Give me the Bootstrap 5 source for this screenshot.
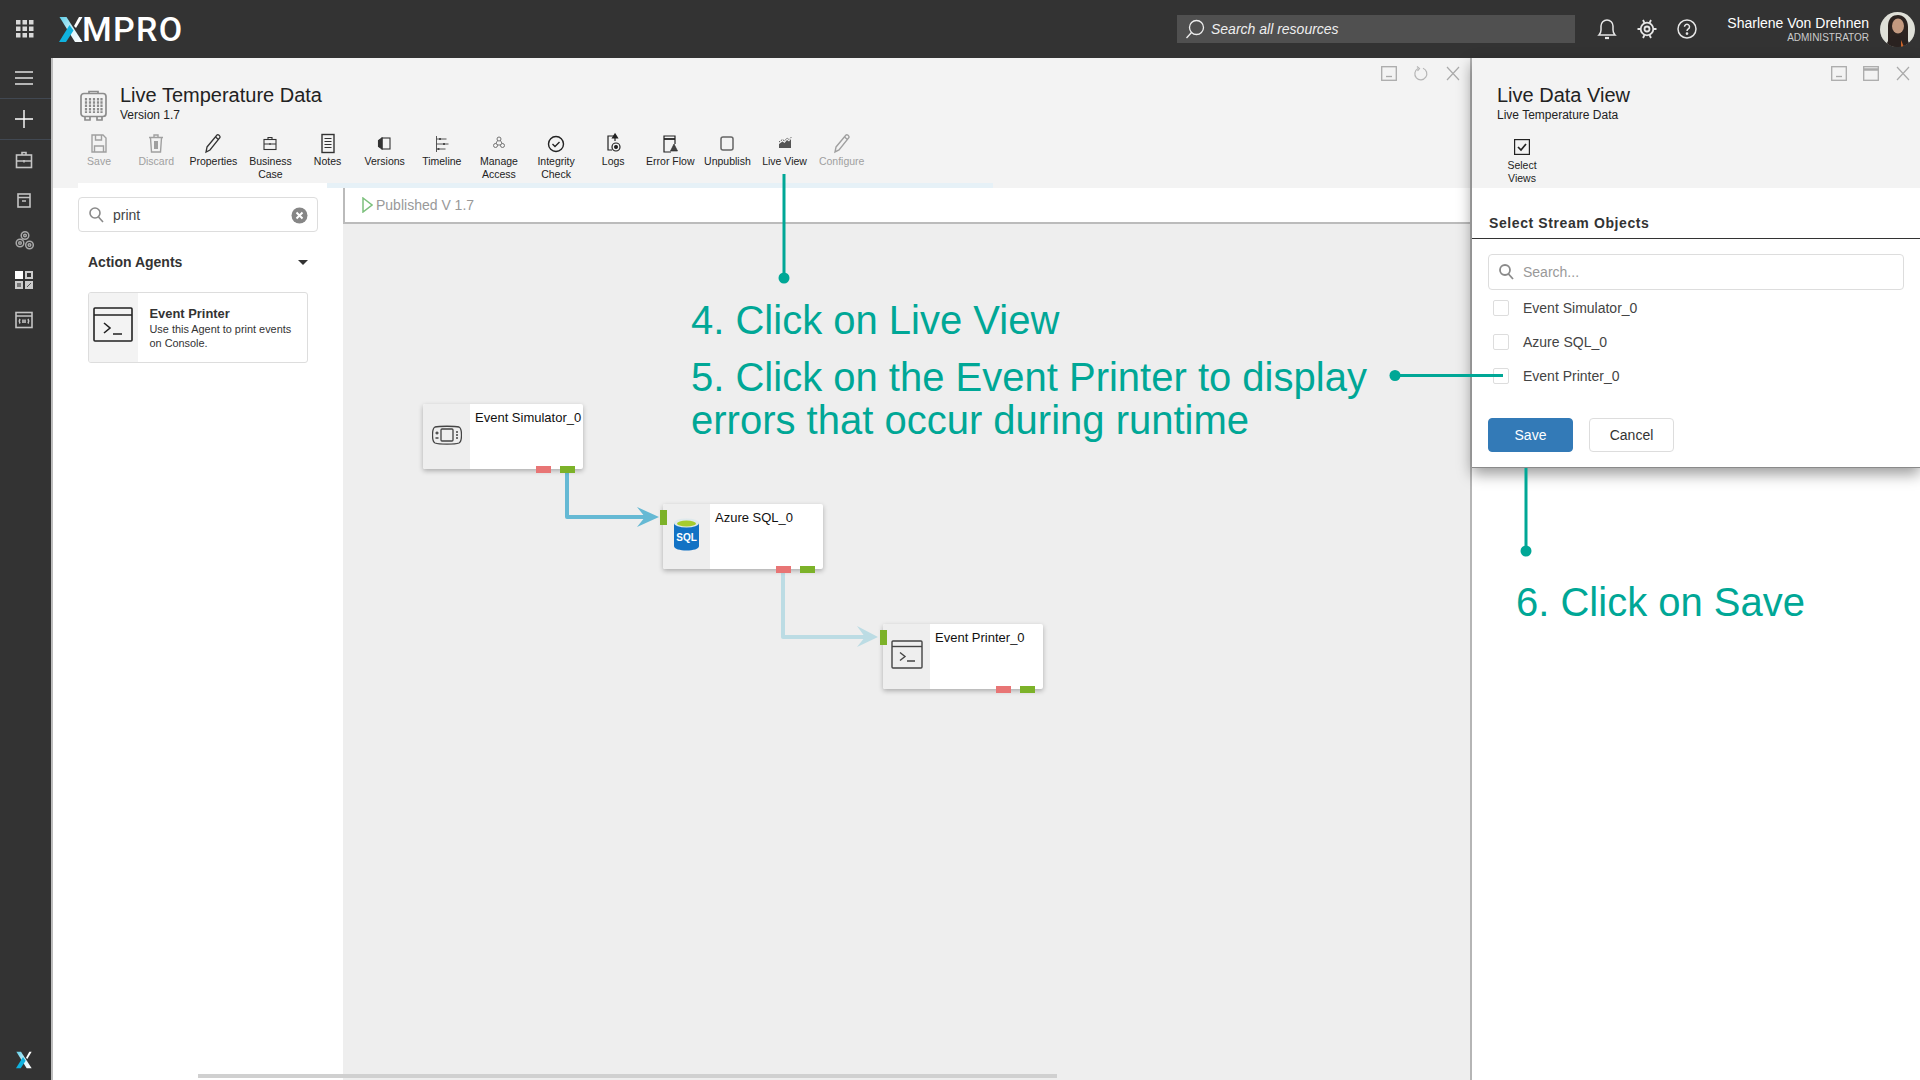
<!DOCTYPE html>
<html lang="en">
<head>
<meta charset="utf-8">
<title>XMPRO - Live Temperature Data</title>
<link href="https://cdn.jsdelivr.net/npm/bootstrap@5.3.0/dist/css/bootstrap.min.css" rel="stylesheet">
<style>
html,body{height:100%;margin:0;overflow:hidden}
body{font-family:"Liberation Sans",Arial,sans-serif;font-size:14px;color:#333;background:#fff}
svg{display:block;flex:none}
.xm-app{position:relative;width:1920px;height:1080px;overflow:hidden}
.xm-top{height:58px;background:#333;color:#fff;padding-left:15px;padding-right:5px}
.xm-top>*{flex:none}
.xm-logo{margin-left:24px;width:122px;height:26px}
.xm-logo-text{font-family:Roboto,"Liberation Sans",sans-serif;font-weight:500;font-size:34px;line-height:26px;letter-spacing:1.3px;color:#fff;margin-left:-1px}
.xm-search-all{width:398px;height:28px;margin-left:996px;background:#505050;padding-left:8px;color:#eee;font-style:italic;font-size:14px}
.xm-search-all svg{margin-right:6px}
.xm-tops{margin-left:22px;gap:20px}
.xm-user{width:172px;text-align:right;line-height:14px;padding-top:1px}
.xm-user-name{font-size:14px;color:#fff;line-height:16px}
.xm-user-role{font-size:10px;color:#ccc;line-height:12px;margin-top:1px}
.xm-avatar{margin-left:11px}
.xm-body{height:1022px}
.xm-side{width:53px;background:#333;border-right:2px solid #bdbdbd;flex:none}
.xm-side-item{height:40px;width:51px;padding-right:3px}
.xm-side-sep{border-bottom:1px solid #414852;height:41px}
.xm-side-x{margin-top:auto;margin-bottom:11px;height:18px;padding-right:3px}
.xm-main{width:1417px;flex:none;position:relative}
.xm-head{height:130px;background:#f3f3f3;flex:none}
.xm-winrow{height:25px;padding:8px 9px 0 0;gap:16px}
.xm-title{font-size:20px;line-height:24px;color:#222}
.xm-sub{font-size:12px;line-height:15px;color:#222;margin-top:1px}
.xm-titlerow{padding-left:27px;gap:13px;height:39px}
.xm-titlerow svg{margin-top:7px}
.xm-tools{padding-left:17.5px;margin-top:10px}
.xm-tool{width:57.14px;text-align:center;font-size:10.5px;line-height:13px;color:#222;flex:none}
.xm-tool svg{margin:0 auto 0;height:23px}
.xm-tool.xm-off{color:#a0a0a0}
.xm-strip{margin-top:auto;height:5px;margin-left:25px;width:915px;background:#e6f1f7}
.xm-strip-w{width:249px;height:5px;background:#fff}
.xm-work{height:892px}
.xm-pal{width:290px;flex:none;padding:9px 25px 0;background:#fff}
.xm-pal-search{height:35px;padding:1px 9px 0 10px;border:1px solid #ddd;border-radius:4px;font-size:14px;color:#444}
.xm-pal-search span{margin-left:9px}
.xm-pal-head{height:60px;padding:0 10px 0 10px;font-weight:700;font-size:14px;color:#333}
.xm-caret{border-left:5px solid transparent;border-right:5px solid transparent;border-top:5px solid #333}
.xm-agent{margin-left:10px;width:220px;height:71px;border:1px solid #ddd;border-radius:3px;overflow:hidden}
.xm-agent-ic{width:49px;background:#f3f3f3;padding:14px 0 0 4px;flex:none}
.xm-agent-tx{padding:13px 0 0 11.5px;color:#333}
.xm-agent-name{font-weight:700;font-size:12.9px;line-height:16px}
.xm-agent-desc{font-size:10.9px;line-height:14px}
.xm-canvas{width:1127px;flex:none;background:#eee;position:relative}
.xm-cbar{height:36px;background:#fff;border-left:2px solid #bbb;border-bottom:2px solid #bbb;padding-left:17px;font-size:14px;color:#999;gap:3px}
.xm-wires{position:absolute;left:0;top:0}
.xm-node{position:absolute;width:160px;height:65px;background:#fff;border-radius:2px;box-shadow:0 2px 5px rgba(0,0,0,.28);font-size:13px;line-height:16px;color:#111}
.xm-n1{left:80px;top:216px}
.xm-n2{left:320px;top:316px}
.xm-n3{left:540px;top:436px}
.xm-node-ic{width:47px;height:65px;padding-bottom:4px;background:#eee;border-radius:2px 0 0 2px;flex:none}
.xm-node-tx{padding:6px 0 0 5px;white-space:nowrap}
.xm-port{position:absolute;top:62px;width:15px;height:7px}
.xm-pr{left:113px;background:#e87575}
.xm-pg{left:137px;background:#7cb229}
.xm-pi{position:absolute;left:-3px;top:6px;width:7px;height:15px;background:#7cb229}
.xm-hscroll{position:absolute;left:145px;bottom:2px;width:859px;height:4px;background:#d0d0d0}
.xm-vsep{width:2px;background:#b5b5b5;flex:none}
.xm-right{width:448px;flex:none;position:relative;background:#fff}
.xm-card{height:410px;background:#fff;border-bottom:1px solid #8a8a8a;box-shadow:0 6px 14px rgba(0,0,0,.4);position:relative}
.xm-rhead{height:130px;background:#f3f3f3}
.xm-winrow2{height:25px;padding:8px 9px 0 0;gap:16px}
.xm-rtitle{padding-left:25px;height:39px}
.xm-selview{width:50px;margin:17px 0 0 25px;text-align:center;font-size:10.5px;line-height:13px;color:#222}
.xm-selview svg{margin:0 auto 4px}
.xm-rh2{height:51px;border-bottom:1.5px solid #333;padding:27px 0 0 17px;font-weight:700;font-size:14px;line-height:16px;letter-spacing:.6px;color:#333}
.xm-rb{padding:15px 16px 0 16px}
.xm-rsearch{height:36px;padding:0 10px;border:1px solid #ddd;border-radius:4px;color:#999;font-size:14px}
.xm-rsearch span{margin-left:9px}
.xm-chk{height:34px;padding-left:5px;color:#444;font-size:14px}
.xm-chks{margin-top:1px;margin-bottom:25px}
.xm-chk .form-check-input{width:16px;height:16px;margin:0 14px 0 0;border:1px solid #ddd;border-radius:2px;flex:none}
.xm-btn{width:85px;height:34px;font-size:14px;padding:0;line-height:32px;border-radius:4px}
.xm-save{background:#337ab7;border-color:#337ab7;color:#fff;margin-right:16px}
.xm-save:hover{background:#337ab7;border-color:#337ab7;color:#fff}
.xm-cancel{background:#fff;border-color:#ddd;color:#333}
.xm-ann{position:absolute;left:0;top:0;pointer-events:none}
.xm-note{position:absolute;color:#00a796;font-size:40px;line-height:43px;white-space:nowrap}
.xm-note4{left:691px;top:298.5px}
.xm-note5{left:691px;top:356px}
.xm-note6{left:1516px;top:581px}
</style>
</head>
<body>
<div class="xm-app">
  <header class="xm-top d-flex align-items-center">
    <svg width="20" height="20" viewBox="0 0 20 20" fill="#d8d8d8" aria-hidden="true"><rect x="1" y="1" width="4.5" height="4.5"/><rect x="7.5" y="1" width="4.5" height="4.5"/><rect x="14" y="1" width="4.5" height="4.5"/><rect x="1" y="7.5" width="4.5" height="4.5"/><rect x="7.5" y="7.5" width="4.5" height="4.5"/><rect x="14" y="7.5" width="4.5" height="4.5"/><rect x="1" y="14" width="4.5" height="4.5"/><rect x="7.5" y="14" width="4.5" height="4.5"/><rect x="14" y="14" width="4.5" height="4.5"/></svg>
    <div class="xm-logo d-flex align-items-center">
      <svg width="24" height="25" viewBox="0 0 24 25"><defs><linearGradient id="xg" x1="0" y1="0" x2="1" y2="1"><stop offset="0" stop-color="#5ccfe9"/><stop offset=".55" stop-color="#d8f3fa"/><stop offset="1" stop-color="#fff"/></linearGradient></defs><polygon points="0.5,0 7.5,0 23.5,25 16,25" fill="url(#xg)"/><polygon points="15,9 20,0 23.5,0 17,11" fill="#fff"/><polygon points="0,25 7,25 14.5,13.5 10.5,8" fill="#0fb2df"/></svg>
      <span class="xm-logo-text">MPRO</span>
    </div>
    <div class="xm-search-all d-flex align-items-center">
      <svg width="20" height="20" viewBox="0 0 20 20" fill="none" stroke="#eee" stroke-width="1.3"><circle cx="11.5" cy="8.5" r="7"/><path d="M6.5 13.5 1.5 19"/></svg>
      <span>Search all resources</span>
    </div>
    <div class="xm-tops d-flex align-items-center">
      <svg width="20" height="22" viewBox="0 0 20 22" fill="none" stroke="#e6e6e6" stroke-width="1.5"><path d="M2 17c1.500-1.500 2-3 2-5V8a6 6 0 0 1 12 0v4c0 2 .5 3.500 2 5z"/><path d="M8 20h4" stroke-width="2.2"/></svg>
      <svg width="20" height="22" viewBox="0 0 20 22" fill="none" stroke="#e6e6e6" stroke-width="1.8"><circle cx="10" cy="11" r="6.300"/><circle cx="10" cy="11" r="2.500"/><path d="M6 2l1.500 3M14 2l-1.500 3M6 20l1.500-3M14 20l-1.500-3M.5 11h3M16.500 11h3"/></svg>
      <svg width="20" height="20" viewBox="0 0 20 20" fill="none" stroke="#e6e6e6" stroke-width="1.5"><circle cx="10" cy="10" r="9"/><path d="M7.500 7.800a2.500 2.500 0 1 1 3.800 2.100c-.9.600-1.300 1-1.300 2"/><circle cx="10" cy="14.600" r=".6" fill="#e6e6e6"/></svg>
    </div>
    <div class="xm-user">
      <div class="xm-user-name">Sharlene Von Drehnen</div>
      <div class="xm-user-role">ADMINISTRATOR</div>
    </div>
    <svg class="xm-avatar" width="35" height="35" viewBox="0 0 35 35"><defs><clipPath id="av"><circle cx="17.500" cy="17.500" r="17.500"/></clipPath></defs><g clip-path="url(#av)"><rect width="35" height="35" fill="#dfe0d8"/><path d="M8 35V14C8 6 13 3 18 3s10 4 10 12v20z" fill="#2c2320"/><ellipse cx="18" cy="14" rx="6" ry="7.500" fill="#c49a80"/><path d="M6 35c1-8 6-11 12-11s11 3 12 11z" fill="#2a2220"/><path d="M21 28l3 7h-3z" fill="#c8642a"/></g></svg>
  </header>

  <div class="xm-body d-flex">
    <aside class="xm-side d-flex flex-column">
      <div class="xm-side-item xm-side-sep d-flex align-items-center justify-content-center"><svg width="18" height="14" viewBox="0 0 18 14" stroke="#b5b5b5" stroke-width="2"><path d="M0 1h18M0 7h18M0 13h18"/></svg></div>
      <div class="xm-side-item xm-side-sep d-flex align-items-center justify-content-center"><svg width="18" height="18" viewBox="0 0 18 18" stroke="#fff" stroke-width="1.400"><path d="M0 9h18M9 0v18"/></svg></div>
      <div class="xm-side-item d-flex align-items-center justify-content-center"><svg width="18" height="18" viewBox="0 0 18 18" fill="none" stroke="#c4c4c4" stroke-width="1.600"><rect x="1.500" y="4" width="15" height="12.500"/><path d="M1.500 10h15M7 4V1.500h4V4M9 9v2.500"/></svg></div>
      <div class="xm-side-item d-flex align-items-center justify-content-center"><svg width="16" height="18" viewBox="0 0 16 18" fill="none" stroke="#c4c4c4" stroke-width="1.600"><rect x="2" y="3" width="12" height="13"/><path d="M2 6.500h12M6 10h4" /></svg></div>
      <div class="xm-side-item d-flex align-items-center justify-content-center"><svg width="19" height="21" viewBox="0 0 19 21" fill="none" stroke="#a8a8a8" stroke-width="1.500"><circle cx="10" cy="5.500" r="3.800"/><circle cx="10" cy="5.500" r="1.300"/><circle cx="5" cy="13" r="3.800"/><circle cx="5" cy="13" r="1.300"/><circle cx="14.500" cy="15" r="3.800"/><circle cx="14.500" cy="15" r="1.300"/></svg></div>
      <div class="xm-side-item d-flex align-items-center justify-content-center"><svg width="18" height="18" viewBox="0 0 18 18"><rect width="8" height="8" fill="#fff"/><rect x="10" width="8" height="8" fill="#ccc"/><rect x="12" y="2" width="4" height="4" fill="#333"/><rect y="10" width="8" height="8" fill="#ccc"/><rect x="2" y="12" width="4" height="4" fill="#777"/><rect x="10" y="10" width="8" height="8" fill="#ccc"/><path d="M12 16l4-4" stroke="#555"/></svg></div>
      <div class="xm-side-item d-flex align-items-center justify-content-center"><svg width="18" height="18" viewBox="0 0 18 18" fill="none" stroke="#c4c4c4" stroke-width="1.600"><rect x="1" y="1.500" width="16" height="15"/><path d="M1 5h16M5 8c-1 1.500-1 3 0 4.500M13 8c1 1.500 1 3 0 4.500M8 8.500v3.500M10 8.500v3.500"/></svg></div>
      <div class="xm-side-x d-flex justify-content-center"><svg width="16" height="18" viewBox="0 0 24 25"><polygon points="0.500,0 7.500,0 23.500,25 16,25" fill="url(#xg)"/><polygon points="15,9 20,0 23.500,0 17,11" fill="#fff"/><polygon points="0,25 7,25 14.500,13.500 10.500,8" fill="#0fb2df"/></svg></div>
    </aside>

    <section class="xm-main d-flex flex-column">
      <div class="xm-head d-flex flex-column">
        <div class="xm-winrow d-flex justify-content-end">
          <svg width="16" height="15" viewBox="0 0 16 15" fill="none" stroke="#aaa" stroke-width="1.300"><rect x=".7" y=".7" width="14.600" height="13.600"/><path d="M5 10.500h6"/></svg>
          <svg width="16" height="15" viewBox="0 0 16 15" fill="none" stroke="#b5b5b5" stroke-width="1.200"><path d="M5 2.500a6 6 0 1 0 5-.3"/><path d="M4 .5l2.500 2L4.500 5"/></svg>
          <svg width="16" height="15" viewBox="0 0 16 15" stroke="#aaa" stroke-width="1.200"><path d="M2 1l12 13M14 1 2 14"/></svg>
        </div>
        <div class="xm-titlerow d-flex">
          <svg width="27" height="31" viewBox="0 0 27 31" fill="none" stroke="#8c8c8c" stroke-width="1.700"><path d="M9 3.500V1.500h9v2"/><rect x="1" y="3.500" width="25" height="23" rx="3"/><path d="M6 8v15M10 8v15M14 8v15M18 8v15M21.500 8v15" stroke-width="2.200" stroke-dasharray="2.500 .8"/><path d="M5 27v3h5v-3M17 27v3h5v-3"/></svg>
          <div><div class="xm-title">Live Temperature Data</div><div class="xm-sub">Version 1.7</div></div>
        </div>
        <div class="xm-tools d-flex">
          <div class="xm-tool xm-off"><svg width="18" viewBox="0 0 18 23" fill="none" stroke="#a0a0a0" stroke-width="1.400"><path d="M2 3h11l3 3v14H2z"/><path d="M5.500 3v5h6V3M4.500 20v-6h9v6"/></svg>Save</div>
          <div class="xm-tool xm-off"><svg width="18" viewBox="0 0 18 23" fill="none" stroke="#a0a0a0" stroke-width="1.400"><path d="M2 5.500h14M7 5V3h4v2M3.500 6l1 14h9l1-14"/><rect x="7" y="9" width="4" height="8" fill="#a0a0a0" stroke="none"/></svg>Discard</div>
          <div class="xm-tool"><svg width="18" viewBox="0 0 18 23" fill="none" stroke="#333" stroke-width="1.300"><path d="M3 15 13 3c1-1 3.500 1 3 2.500L6 18l-4 2z"/><path d="M11.500 5l3 2.500"/></svg>Properties</div>
          <div class="xm-tool"><svg width="18" viewBox="0 0 18 23" fill="none" stroke="#333" stroke-width="1.100"><rect x="3" y="7.500" width="12" height="10"/><path d="M3 12h12M7 7.500V5.500h4v2M9 11v2"/></svg>Business<br>Case</div>
          <div class="xm-tool"><svg width="18" viewBox="0 0 18 23" fill="none" stroke="#333" stroke-width="1.400"><rect x="3" y="2.500" width="12" height="18"/><path d="M5.500 6.500h7M5.500 9.500h7M5.500 12.500h7M5.500 15.500h7" stroke-width="1.200"/></svg>Notes</div>
          <div class="xm-tool"><svg width="18" viewBox="0 0 18 23" fill="none" stroke="#333" stroke-width="1.100"><rect x="6" y="6" width="8" height="11"/><path d="M6 6 2.500 8.500v6L6 17z" fill="#333"/></svg>Versions</div>
          <div class="xm-tool"><svg width="18" viewBox="0 0 18 23" fill="none" stroke="#444" stroke-width=".9"><path d="M3.500 4v16M3.500 7h10M3.500 12h12M3.500 17h9"/><path d="M7 6v2M11 11v2M5.500 16v2" stroke-width="1.800"/></svg>Timeline</div>
          <div class="xm-tool"><svg width="18" viewBox="0 0 18 23" fill="none" stroke="#666" stroke-width=".9"><path d="M9 6l4 7H5z"/><circle cx="9" cy="7" r="2" fill="#f3f3f3"/><circle cx="5.500" cy="13.500" r="2" fill="#f3f3f3"/><circle cx="12.500" cy="13.500" r="2" fill="#f3f3f3"/></svg>Manage<br>Access</div>
          <div class="xm-tool"><svg width="18" viewBox="0 0 18 23" fill="none" stroke="#222" stroke-width="1.400"><circle cx="9" cy="12" r="7.500"/><path d="M5.500 12l2.500 2.500L12.500 10"/></svg>Integrity<br>Check</div>
          <div class="xm-tool"><svg width="18" viewBox="0 0 18 23" fill="none" stroke="#222" stroke-width="1.200"><path d="M10 4H4v14h4"/><path d="M11 2l-2.500 4h5zM11 6v3" fill="#222"/><circle cx="12" cy="15" r="4"/><circle cx="12" cy="15" r="1.400" fill="#222"/></svg>Logs</div>
          <div class="xm-tool"><svg width="18" viewBox="0 0 18 23" fill="none" stroke="#222" stroke-width="1.200"><path d="M14 12V4H3v16h7"/><path d="M3 7h11" stroke-width="1.800"/><path d="M13 12l-3.500 7h7z" fill="#444" stroke-width=".6"/></svg>Error Flow</div>
          <div class="xm-tool"><svg width="18" viewBox="0 0 18 23" fill="none" stroke="#666" stroke-width="1.500"><rect x="3" y="5" width="12" height="13" rx="2"/></svg>Unpublish</div>
          <div class="xm-tool"><svg width="18" viewBox="0 0 18 23"><path d="M3 16v-4l3.500-2.500 2 1.500L11 8l2 1.500L15 7v9z" fill="#555"/><path d="M3 10l3.500-2.500 2 1.500L11 6l2 1.500L15.500 5" fill="none" stroke="#555" stroke-dasharray="1.500 1"/></svg>Live View</div>
          <div class="xm-tool xm-off"><svg width="18" viewBox="0 0 18 23" fill="none" stroke="#a0a0a0" stroke-width="1.400"><path d="M3 15 13 3c1-1 3.500 1 3 2.500L6 18l-4 2z"/><path d="M11.500 5l3 2.500"/></svg>Configure</div>
        </div>
        <div class="xm-strip"><div class="xm-strip-w"></div></div>
      </div>

      <div class="xm-work d-flex">
        <div class="xm-pal">
          <div class="xm-pal-search d-flex align-items-center">
            <svg width="15" height="16" viewBox="0 0 15 16" fill="none" stroke="#8a8a8a" stroke-width="1.600"><circle cx="6" cy="6" r="5"/><path d="M9.500 10l4.500 5"/></svg>
            <span class="flex-grow-1">print</span>
            <svg width="17" height="17" viewBox="0 0 17 17"><circle cx="8.500" cy="8.500" r="8" fill="#868686"/><path d="M5.500 5.500l6 6M11.500 5.500l-6 6" stroke="#fff" stroke-width="2"/></svg>
          </div>
          <div class="xm-pal-head d-flex align-items-center justify-content-between"><span>Action Agents</span><span class="xm-caret"></span></div>
          <div class="xm-agent card flex-row">
            <div class="xm-agent-ic"><svg width="40" height="35" viewBox="0 0 40 35" fill="none" stroke="#222" stroke-width="1.600"><rect x="1" y="1" width="38" height="33" rx="1"/><path d="M1 8h38"/><path d="M11 16l6 5-6 5M20 27h9"/></svg></div>
            <div class="xm-agent-tx"><div class="xm-agent-name">Event Printer</div><div class="xm-agent-desc">Use this Agent to print events<br>on Console.</div></div>
          </div>
        </div>

        <div class="xm-canvas">
          <div class="xm-cbar d-flex align-items-center">
            <svg width="11" height="16" viewBox="0 0 11 16" fill="none" stroke="#7cc07c" stroke-width="1.500"><path d="M1 1l9 7-9 7z"/></svg>
            <span>Published V 1.7</span>
          </div>
          <svg class="xm-wires" width="700" height="520" viewBox="0 0 700 520" fill="none">
            <path d="M224 285V329H306" stroke="#65b9d4" stroke-width="4" stroke-linejoin="round"/>
            <polygon points="316,329 294,319 302,329 294,339" fill="#65b9d4"/>
            <path d="M440 385V449H526" stroke="#bcdce4" stroke-width="4" stroke-linejoin="round"/>
            <polygon points="535,449 514,438 522,449 514,459" fill="#bcdce4"/>
          </svg>

          <div class="xm-node xm-n1 d-flex">
            <div class="xm-node-ic d-flex align-items-center justify-content-center"><svg width="30" height="20" viewBox="0 0 30 20" fill="none" stroke="#444" stroke-width="1.300"><path d="M3 2c4-1 20-1 24 0 2 1 2.500 3 2.500 8s-.5 7-2.500 8c-4 1.500-20 1.500-24 0C1 17 .5 15 .5 10S1 3 3 2z"/><rect x="9" y="4" width="12" height="12" rx="1"/><path d="M3.500 8h3M5 6.500v3M3.500 13h3M24 7h2M24 10h2M24 13h2"/></svg></div>
            <div class="xm-node-tx">Event Simulator_0</div>
            <span class="xm-port xm-pr"></span><span class="xm-port xm-pg"></span>
          </div>
          <div class="xm-node xm-n2 d-flex">
            <div class="xm-node-ic d-flex align-items-center justify-content-center"><svg width="25" height="33" viewBox="0 0 25 33"><path d="M0 5v23c0 3 6 4.500 12.500 4.500S25 31 25 28V5z" fill="#1272c4"/><ellipse cx="12.500" cy="5" rx="12.500" ry="4.500" fill="#dfe9ec"/><ellipse cx="12.500" cy="5.500" rx="9.500" ry="3" fill="#a6cc2e"/><text x="12.500" y="23" text-anchor="middle" font-family="'Liberation Sans',sans-serif" font-size="10" font-weight="700" fill="#fff">SQL</text></svg></div>
            <div class="xm-node-tx">Azure SQL_0</div>
            <span class="xm-pi"></span><span class="xm-port xm-pr"></span><span class="xm-port xm-pg"></span>
          </div>
          <div class="xm-node xm-n3 d-flex">
            <div class="xm-node-ic d-flex align-items-center justify-content-center"><svg width="32" height="29" viewBox="0 0 32 29" fill="none" stroke="#444" stroke-width="1.400"><rect x="1" y="1" width="30" height="27" rx="1"/><path d="M1 6.500h30"/><path d="M9 12.500l5 4-5 4M16 21h8"/></svg></div>
            <div class="xm-node-tx">Event Printer_0</div>
            <span class="xm-pi"></span><span class="xm-port xm-pr"></span><span class="xm-port xm-pg"></span>
          </div>
        </div>
      </div>
      <div class="xm-hscroll"></div>
    </section>

    <div class="xm-vsep"></div>

    <section class="xm-right">
      <div class="xm-card">
        <div class="xm-rhead">
          <div class="xm-winrow2 d-flex justify-content-end">
            <svg width="16" height="15" viewBox="0 0 16 15" fill="none" stroke="#aaa" stroke-width="1.300"><rect x=".7" y=".7" width="14.600" height="13.600"/><path d="M5 10.500h6"/></svg>
            <svg width="16" height="15" viewBox="0 0 16 15" fill="none" stroke="#aaa" stroke-width="1.300"><rect x=".7" y=".7" width="14.600" height="13.600"/><path d="M.7 3.500h14.600" stroke-width="2.500"/></svg>
            <svg width="16" height="15" viewBox="0 0 16 15" stroke="#aaa" stroke-width="1.200"><path d="M2 1l12 13M14 1 2 14"/></svg>
          </div>
          <div class="xm-rtitle"><div class="xm-title">Live Data View</div><div class="xm-sub">Live Temperature Data</div></div>
          <div class="xm-selview"><svg width="16" height="16" viewBox="0 0 16 16" fill="none" stroke="#222"><rect x=".6" y=".6" width="14.800" height="14.800" stroke-width="1.200"/><path d="M4 8l3 3 5-6" stroke-width="1.700"/></svg>Select<br>Views</div>
        </div>
        <div class="xm-rh2">Select Stream Objects</div>
        <div class="xm-rb">
          <div class="xm-rsearch d-flex align-items-center">
            <svg width="15" height="16" viewBox="0 0 15 16" fill="none" stroke="#8a8a8a" stroke-width="1.800"><circle cx="6" cy="6" r="5"/><path d="M9.500 10l4.500 5"/></svg>
            <span>Search...</span>
          </div>
          <div class="xm-chks">
            <label class="xm-chk d-flex align-items-center"><input class="form-check-input" type="checkbox"><span>Event Simulator_0</span></label>
            <label class="xm-chk d-flex align-items-center"><input class="form-check-input" type="checkbox"><span>Azure SQL_0</span></label>
            <label class="xm-chk d-flex align-items-center"><input class="form-check-input" type="checkbox"><span>Event Printer_0</span></label>
          </div>
          <div class="d-flex">
            <button type="button" class="btn xm-btn xm-save">Save</button>
            <button type="button" class="btn xm-btn xm-cancel">Cancel</button>
          </div>
        </div>
      </div>
    </section>
  </div>

  <svg class="xm-ann" width="1920" height="1080" viewBox="0 0 1920 1080" fill="#00a796" stroke="#00a796" stroke-width="3">
    <path d="M784 174V278"/><circle cx="784" cy="278" r="5.500" stroke="none"/>
    <path d="M1395 375.500H1503"/><circle cx="1395" cy="375.500" r="5.500" stroke="none"/>
    <path d="M1526 468V551"/><circle cx="1526" cy="551" r="5.500" stroke="none"/>
  </svg>
  <div class="xm-note xm-note4">4. Click on Live View</div>
  <div class="xm-note xm-note5">5. Click on the Event Printer to display<br>errors that occur during runtime</div>
  <div class="xm-note xm-note6">6. Click on Save</div>
</div>
<script src="https://cdn.jsdelivr.net/npm/bootstrap@5.3.0/dist/js/bootstrap.bundle.min.js"></script>
</body>
</html>
